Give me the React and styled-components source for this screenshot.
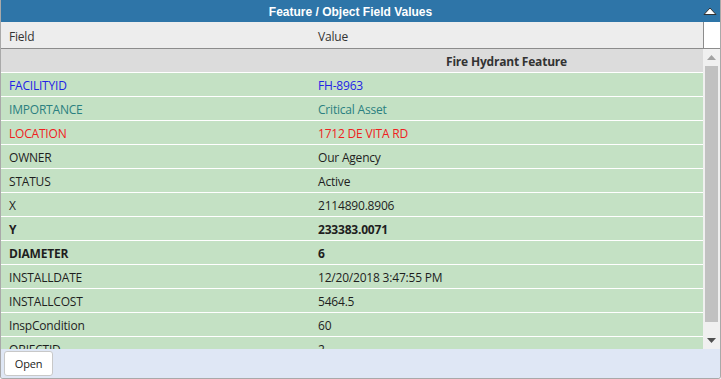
import styled, { createGlobalStyle } from "styled-components";

const Global = createGlobalStyle`
    html, body {
        margin: 0;
        padding: 0;
        background: #ffffff;
    }
    * {
        box-sizing: border-box;
    }
`
const Panel = styled.div`
    width: 721px;
    height: 379px;
    display: flex;
    flex-direction: column;
    border: 1px solid #a9a9a9;
    border-top: none;
    border-radius: 0 0 3px 3px;
    overflow: hidden;
    font-family: "Open Sans", "Noto Sans", sans-serif;
    font-size: 12px;
    letter-spacing: -0.2px;
    color: #222222;
`
const TitleBar = styled.div`
    height: 22px;
    flex: none;
    display: flex;
    align-items: center;
    background: #2e75a8;
    color: #ffffff;
`
const Title = styled.div`
    flex: 1;
    padding-top: 1px;
    text-align: center;
    font-family: "Liberation Sans", Arial, sans-serif;
    font-weight: bold;
    font-size: 12px;
    letter-spacing: 0;
`
const Collapse = styled.div`
    width: 20px;
    height: 22px;
    display: flex;
    align-items: center;
    justify-content: center;
`
const HeaderRow = styled.div`
    height: 27px;
    flex: none;
    display: grid;
    grid-template-columns: 309px 1fr 17px;
    background: #ededed;
    border-bottom: 1px solid #8c8c8c;
`
const HeadCell = styled.div`
    padding: 3px 0 0 8px;
    display: flex;
    align-items: center;
    color: #333333;
`
const HeadGap = styled.div`
    background: #ffffff;
    border-left: 1px solid #8c8c8c;
`
const Body = styled.div`
    flex: 1;
    min-height: 0;
    display: flex;
`
const Rows = styled.div`
    flex: 1;
    overflow: hidden;
`
const GroupRow = styled.div`
    height: 23px;
    display: grid;
    grid-template-columns: 309px 1fr;
    background: #dcdcdc;
    font-weight: bold;
    color: #333333;
`
const GroupTitle = styled.div`
    grid-column: 2;
    padding-top: 2px;
    display: flex;
    align-items: center;
    justify-content: center;
`
const Row = styled.div`
    height: 24px;
    display: grid;
    grid-template-columns: 309px 1fr;
    background: #c4e1c4;
    border-top: 1px solid #ffffff;
    color: ${p => p.$color || "#1e1e1e"};
    font-weight: ${p => (p.$bold ? "bold" : "normal")};
`
const Cell = styled.div`
    padding: 2px 0 0 8px;
    display: flex;
    align-items: center;
    white-space: nowrap;
`
const Scrollbar = styled.div`
    width: 17px;
    flex: none;
    display: flex;
    flex-direction: column;
    background: #f0f0f0;
`
const Arrow = styled.div`
    height: 17px;
    flex: none;
    display: flex;
    align-items: center;
    justify-content: center;
`
const Track = styled.div`
    flex: 1;
    padding: 0 2px;
    display: flex;
    flex-direction: column;
`
const Thumb = styled.div`
    height: 256px;
    background: #c1c1c1;
`
const Footer = styled.div`
    height: 29px;
    flex: none;
    display: flex;
    align-items: center;
    padding-left: 3px;
    background: #dfe7f5;
`
const Button = styled.button`
    width: 49px;
    height: 25px;
    background: #ffffff;
    border: 1px solid #c8c8c8;
    border-radius: 3px;
    font-family: "Open Sans", "Noto Sans", sans-serif;
    font-size: 11px;
    letter-spacing: -0.2px;
    color: #222222;
    padding: 0;
`

const data = [
    { f: "FACILITYID", v: "FH-8963", color: "#2323e6" },
    { f: "IMPORTANCE", v: "Critical Asset", color: "#2a8080" },
    { f: "LOCATION", v: "1712 DE VITA RD", color: "#f02020" },
    { f: "OWNER", v: "Our Agency" },
    { f: "STATUS", v: "Active" },
    { f: "X", v: "2114890.8906" },
    { f: "Y", v: "233383.0071", bold: true },
    { f: "DIAMETER", v: "6", bold: true },
    { f: "INSTALLDATE", v: "12/20/2018 3:47:55 PM" },
    { f: "INSTALLCOST", v: "5464.5" },
    { f: "InspCondition", v: "60" },
    { f: "OBJECTID", v: "2" },
]

function App() {
    return (
        <>
            <Global />
            <Panel>
                <TitleBar>
                    <Title>Feature / Object Field Values</Title>
                    <Collapse>
                        <svg width="14" height="8" viewBox="0 0 14 8">
                            <path d="M1 7.5 L7 1 L13 7.5 Z" fill="#ffffff" stroke="#333333" strokeWidth="1" />
                        </svg>
                    </Collapse>
                </TitleBar>
                <HeaderRow>
                    <HeadCell>Field</HeadCell>
                    <HeadCell>Value</HeadCell>
                    <HeadGap />
                </HeaderRow>
                <Body>
                    <Rows>
                        <GroupRow>
                            <GroupTitle>Fire Hydrant Feature</GroupTitle>
                        </GroupRow>
                        {data.map((r, i) => (
                            <Row key={i} $color={r.color} $bold={r.bold}>
                                <Cell>{r.f}</Cell>
                                <Cell>{r.v}</Cell>
                            </Row>
                        ))}
                    </Rows>
                    <Scrollbar>
                        <Arrow>
                            <svg width="9" height="5" viewBox="0 0 9 5">
                                <path d="M0 5 L4.5 0 L9 5 Z" fill="#a3a3a3" />
                            </svg>
                        </Arrow>
                        <Track>
                            <Thumb />
                        </Track>
                        <Arrow>
                            <svg width="9" height="5" viewBox="0 0 9 5">
                                <path d="M0 0 L9 0 L4.5 5 Z" fill="#505050" />
                            </svg>
                        </Arrow>
                    </Scrollbar>
                </Body>
                <Footer>
                    <Button>Open</Button>
                </Footer>
            </Panel>
        </>
    );
}

export default App
